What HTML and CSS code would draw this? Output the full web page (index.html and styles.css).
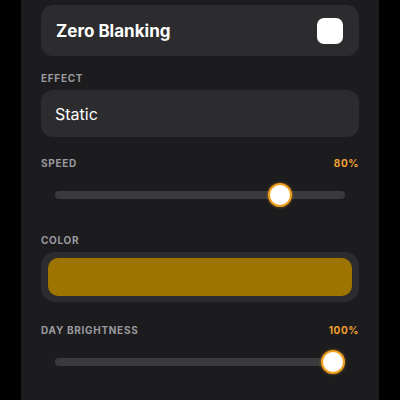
FILE: index.html
```html
<!DOCTYPE html>
<html lang="en">
<head>
  <meta charset="UTF-8" />
  <meta name="viewport" content="width=device-width, initial-scale=1.0"/>
  <title>Display Settings</title>
  <link rel="stylesheet" href="styles.css">
</head>
<body>

  <div class="panel">
    <div class="card toggle-card">
      <span class="card-title">Zero Blanking</span>
      <span class="checkbox"></span>
    </div>

    <div class="label-row label-effect">
      <span class="label">EFFECT</span>
    </div>
    <div class="card select-card">
      <span class="card-text">Static</span>
    </div>

    <div class="label-row label-speed">
      <span class="label">SPEED</span>
      <span class="value">80%</span>
    </div>
    <div class="slider">
      <div class="track"></div>
      <div class="thumb" style="left: 213px;"></div>
    </div>

    <div class="label-row label-color">
      <span class="label">COLOR</span>
    </div>
    <div class="color-card">
      <div class="swatch"></div>
    </div>

    <div class="label-row label-day">
      <span class="label">DAY BRIGHTNESS</span>
      <span class="value">100%</span>
    </div>
    <div class="slider">
      <div class="track"></div>
      <div class="thumb" style="left: 266px;"></div>
    </div>
  </div>

</body>
</html>
```

FILE: styles.css
```css
html, body {
  margin: 0;
  height: 100%;
  background: #000;
}

body {
  font-family: Inter, 'Noto Sans', sans-serif;
  display: flex;
  justify-content: center;
}

.panel {
  width: 318px;
  padding: 5px 20px 0;
  background: #1c1c1e;
  min-height: 395px;
}

.card {
  background: #2c2c2e;
  border-radius: 12px;
  display: flex;
  align-items: center;
  color: #fff;
}

.toggle-card {
  height: 51px;
  padding: 0 16px 0 15px;
  justify-content: space-between;
}

.card-title {
  font-size: 17px;
  font-weight: 700;
}

.checkbox {
  width: 26px;
  height: 26px;
  border-radius: 7px;
  background: #fff;
}

.select-card {
  height: 47px;
  padding: 0 14px;
}

.card-text {
  font-size: 16px;
}

.label-row {
  display: flex;
  justify-content: space-between;
  align-items: center;
  height: 12px;
}

.label {
  font-size: 10px;
  font-weight: 700;
  letter-spacing: 0.7px;
  color: #9a9a9f;
}

.value {
  font-size: 10px;
  font-weight: 700;
  letter-spacing: 0.6px;
  color: #f0a030;
}

.label-effect {
  margin: 16px 0 6px;
}

.label-speed {
  margin: 20px 0 0;
}

.label-color {
  margin: 23px 0 6px;
}

.label-day {
  margin: 22px 0 0;
}

.slider {
  position: relative;
  height: 32px;
  margin: 10px 14px 0;
  display: flex;
  align-items: center;
}

.track {
  flex: 1;
  height: 8px;
  border-radius: 4px;
  background: #3a3a3c;
}

.thumb {
  position: absolute;
  top: 4px;
  width: 20px;
  height: 20px;
  border-radius: 50%;
  background: #fff;
  border: 2px solid #f0a020;
  box-shadow: 0 0 3px rgba(240, 160, 32, 0.6);
}

.color-card {
  background: #2c2c2e;
  border-radius: 14px;
  padding: 6px 7px;
}

.swatch {
  height: 38px;
  border-radius: 10px;
  background: #9e7400;
}
```
